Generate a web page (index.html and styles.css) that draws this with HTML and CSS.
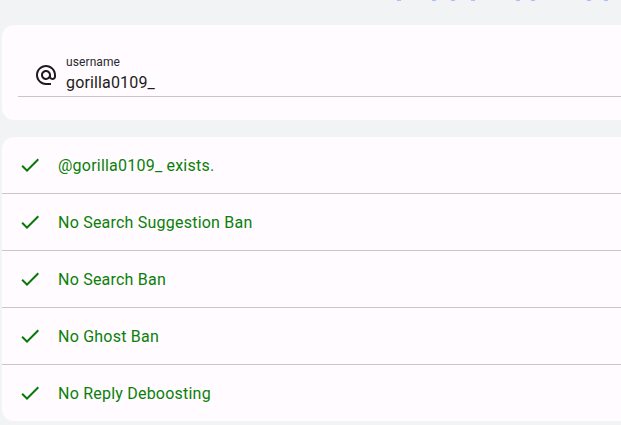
FILE: index.html
```html
<!DOCTYPE html>
<html lang="en">
<head>
<meta charset="utf-8">
<title>Shadowban check</title>
<link rel="stylesheet" href="styles.css">
</head>
<body>
<div class="page">
  <div class="top-strip">
    <span class="dot"></span><span class="dot"></span><span class="dot"></span><span class="dot"></span>
    <span class="dot"></span><span class="dot"></span><span class="dot"></span><span class="dot"></span>
  </div>

  <section class="card search-card">
    <label class="field">
      <svg class="field-icon" viewBox="0 0 24 24" aria-hidden="true">
        <path d="M12 2C6.48 2 2 6.48 2 12s4.480 10 10 10h5v-2h-5c-4.34 0-8-3.66-8-8s3.66-8 8-8 8 3.66 8 8v1.43c0 .79-.71 1.57-1.5 1.57s-1.5-.78-1.5-1.57V12c0-2.76-2.24-5-5-5s-5 2.240-5 5 2.24 5 5 5c1.38 0 2.64-.56 3.54-1.47.65.89 1.77 1.47 2.96 1.47 1.97 0 3.5-1.6 3.5-3.57V12c0-5.52-4.48-10-10-10zm0 13c-1.66 0-3-1.34-3-3s1.34-3 3-3 3 1.34 3 3-1.34 3-3 3z"/>
      </svg>
      <span class="field-body">
        <span class="field-label">username</span>
        <span class="field-value">gorilla0109_</span>
      </span>
    </label>
  </section>

  <section class="card results-card">
    <ul class="results">
      <li class="result">
        <svg class="check" viewBox="0 0 24 24" aria-hidden="true"><path d="M9 16.17L4.83 12l-1.42 1.41L9 19 21 7l-1.41-1.41z"/></svg>
        <span class="result-text">@gorilla0109_ exists.</span>
      </li>
      <li class="result">
        <svg class="check" viewBox="0 0 24 24" aria-hidden="true"><path d="M9 16.17L4.83 12l-1.42 1.41L9 19 21 7l-1.41-1.41z"/></svg>
        <span class="result-text">No Search Suggestion Ban</span>
      </li>
      <li class="result">
        <svg class="check" viewBox="0 0 24 24" aria-hidden="true"><path d="M9 16.17L4.83 12l-1.42 1.41L9 19 21 7l-1.41-1.41z"/></svg>
        <span class="result-text">No Search Ban</span>
      </li>
      <li class="result">
        <svg class="check" viewBox="0 0 24 24" aria-hidden="true"><path d="M9 16.17L4.83 12l-1.42 1.41L9 19 21 7l-1.41-1.41z"/></svg>
        <span class="result-text">No Ghost Ban</span>
      </li>
      <li class="result">
        <svg class="check" viewBox="0 0 24 24" aria-hidden="true"><path d="M9 16.17L4.83 12l-1.42 1.41L9 19 21 7l-1.41-1.41z"/></svg>
        <span class="result-text">No Reply Deboosting</span>
      </li>
    </ul>
  </section>
</div>
</body>
</html>
```

FILE: styles.css
```css
html, body {
  margin: 0;
  padding: 0;
  background: #f1f3f4;
  overflow: hidden;
  font-family: Roboto, "Noto Sans", "Liberation Sans", sans-serif;
}

.page {
  width: 740px;
  padding-left: 2px;
}

/* tail of the scrolled-off header links */
.top-strip {
  height: 1px;
  display: flex;
  align-items: flex-start;
  padding-left: 395px;
}
.top-strip .dot {
  width: 4px;
  height: 1px;
  background: #a9c3f5;
  flex: none;
}
.top-strip .dot:nth-child(2) { margin-left: 31px; }
.top-strip .dot:nth-child(3) { margin-left: 15px; }
.top-strip .dot:nth-child(4) { margin-left: 16px; }
.top-strip .dot:nth-child(5) { margin-left: 41px; }
.top-strip .dot:nth-child(6) { margin-left: 11px; }
.top-strip .dot:nth-child(7) { margin-left: 52px; }
.top-strip .dot:nth-child(8) { margin-left: 13px; }

.card {
  background: #fffbfe;
  border-radius: 12px;
  overflow: hidden;
}

.search-card {
  margin-top: 24px;
  padding: 29px 0 23px 16px;
}

.field {
  display: flex;
  align-items: center;
  gap: 8px;
  padding: 0 0 1px 16px;
  border-bottom: 1px solid #c9c5cb;
}

.field-icon {
  width: 24px;
  height: 24px;
  fill: #1d1b20;
  flex: none;
}

.field-body {
  display: flex;
  flex-direction: column;
}

.field-label {
  font-size: 12px;
  line-height: 16px;
  color: #2b2930;
  letter-spacing: 0.1px;
}

.field-value {
  font-size: 16px;
  line-height: 25px;
  color: #1d1b20;
  letter-spacing: 0.15px;
}

.results-card {
  margin-top: 17px;
}

.results {
  list-style: none;
  margin: 0;
  padding: 0;
}

.result {
  display: flex;
  align-items: center;
  gap: 16px;
  height: 56px;
  padding-left: 16px;
}

.result + .result {
  border-top: 1px solid #c9c5cb;
}

.check {
  width: 24px;
  height: 24px;
  fill: #067a06;
  flex: none;
}

.result-text {
  font-size: 16px;
  line-height: 24px;
  padding-top: 2px;
  color: #0a800a;
  letter-spacing: 0.22px;
}
```
